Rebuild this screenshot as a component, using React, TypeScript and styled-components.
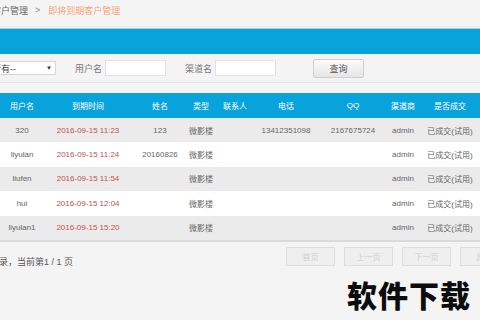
import React from "react";
import styled, { createGlobalStyle } from "styled-components";

const Global = createGlobalStyle`
  html, body { margin: 0; padding: 0; background: #f4f4f4; }
  body {
    font-family: "Liberation Sans", "Noto Sans CJK SC", sans-serif;
    color: #666;
    overflow: hidden;
  }
`;

const Page = styled.div`
  position: relative;
  width: 480px;
  height: 320px;
  overflow: hidden;
  background: #f4f4f4;
`;

const Breadcrumb = styled.div`
  height: 27px;
  display: flex;
  align-items: center;
  font-size: 9px;
  color: #666;
  border-bottom: 1px solid #e9e9e9;
  white-space: nowrap;
  padding-bottom: 6px;
  box-sizing: border-box;
`;

const Crumb = styled.span<{ $active?: boolean }>`
  color: ${(p) => (p.$active ? "#f5a57c" : "#666")};
  margin-left: ${(p) => (p.$active ? "0" : "-8px")};
`;

const Sep = styled.span`
  margin: 0 8px 0 7px;
  color: #888;
`;

const BlueBar = styled.div`
  margin-top: 1px;
  height: 25px;
  background: #09a3dc;
  border-top: 1px solid #8fd6f0;
`;

const FilterRow = styled.div`
  height: 28px;
  display: flex;
  align-items: center;
  border-bottom: 1px solid #e4e4e4;
  font-size: 9px;
  white-space: nowrap;
`;

const Select = styled.div`
  flex: none;
  width: 74px;
  margin-left: -18px;
  height: 14px;
  background: #fff;
  border: 1px solid #d6d6d6;
  display: flex;
  align-items: center;
  justify-content: space-between;
  padding: 0 3px 0 9px;
  box-sizing: border-box;
  color: #444;
  font-size: 9px;
`;

const Arrow = styled.span`
  font-size: 6px;
  color: #333;
`;

const Label = styled.span<{ $ml: number }>`
  margin-left: ${(p) => p.$ml}px;
  margin-right: 3px;
  color: #777;
`;

const Input = styled.div<{ $w: number }>`
  flex: none;
  width: ${(p) => p.$w}px;
  height: 16px;
  background: #fff;
  border: 1px solid #e2e2e2;
  box-sizing: border-box;
`;

const QueryButton = styled.div`
  flex: none;
  margin-left: 37px;
  width: 51px;
  height: 19px;
  box-sizing: border-box;
  border: 1px solid #cfcfcf;
  border-radius: 2px;
  background: linear-gradient(#fbfbfb, #e6e6e6);
  display: flex;
  align-items: center;
  justify-content: center;
  color: #555;
  font-size: 9px;
`;

const Table = styled.div`
  margin-top: 10px;
  border-bottom: 2px solid #dadada;
`;

const cols = "44px 88px 56px 26px 42px 60px 74px 26px 68px";

const HeadRow = styled.div`
  display: grid;
  grid-template-columns: ${cols};
  height: 25px;
  background: #09a3dc;
  color: #fff;
  font-size: 8px;
`;

const Row = styled.div<{ $alt: boolean }>`
  display: grid;
  grid-template-columns: ${cols};
  height: 24.4px;
  background: ${(p) => (p.$alt ? "#ebebeb" : "#ffffff")};
  font-size: 8px;
  color: #666;
`;

const Cell = styled.div<{ $red?: boolean }>`
  display: flex;
  align-items: center;
  justify-content: center;
  white-space: nowrap;
  min-width: 0;
  color: ${(p) => (p.$red ? "#c4514e" : "inherit")};
`;

const Footer = styled.div`
  display: flex;
  align-items: flex-start;
  height: 40px;
  padding-top: 5px;
  box-sizing: border-box;
`;

const Info = styled.div`
  margin-top: 8px;
  margin-left: -10px;
  font-size: 9px;
  color: #555;
  white-space: nowrap;
`;

const Pager = styled.div`
  margin-left: auto;
  margin-right: -29px;
  display: flex;
  gap: 9px;
`;

const PageBtn = styled.div`
  width: 49px;
  height: 19px;
  box-sizing: border-box;
  border: 1px solid #dedede;
  background: #efefef;
  display: flex;
  align-items: center;
  justify-content: center;
  font-size: 8px;
  color: #cfcfcf;
`;

const Watermark = styled.div`
  position: absolute;
  left: 347px;
  top: 272px;
  font-family: "Noto Sans CJK SC", sans-serif;
  font-weight: 900;
  font-size: 30px;
  letter-spacing: 1px;
  color: #0c0c0c;
  white-space: nowrap;
`;

type Rec = {
  user: string;
  time: string;
  name: string;
  type: string;
  contact: string;
  phone: string;
  qq: string;
  channel: string;
  deal: string;
};

const rows: Rec[] = [
  { user: "320", time: "2016-09-15 11:23", name: "123", type: "微影楼", contact: "", phone: "13412351098", qq: "2167675724", channel: "admin", deal: "已成交(试用)" },
  { user: "liyulan", time: "2016-09-15 11:24", name: "20160826", type: "微影楼", contact: "", phone: "", qq: "", channel: "admin", deal: "已成交(试用)" },
  { user: "liufen", time: "2016-09-15 11:54", name: "", type: "微影楼", contact: "", phone: "", qq: "", channel: "admin", deal: "已成交(试用)" },
  { user: "hui", time: "2016-09-15 12:04", name: "", type: "微影楼", contact: "", phone: "", qq: "", channel: "admin", deal: "已成交(试用)" },
  { user: "liyulan1", time: "2016-09-15 15:20", name: "", type: "微影楼", contact: "", phone: "", qq: "", channel: "admin", deal: "已成交(试用)" },
];

const heads = ["用户名", "到期时间", "姓名", "类型", "联系人", "电话", "QQ", "渠道商", "是否成交"];

export default function App() {
  return (
    <Page>
      <Global />
      <Breadcrumb>
        <Crumb>客户管理</Crumb>
        <Sep>&gt;</Sep>
        <Crumb $active>即将到期客户管理</Crumb>
      </Breadcrumb>
      <BlueBar />
      <FilterRow>
        <Select>
          <span>所有--</span>
          <Arrow>▼</Arrow>
        </Select>
        <Label $ml={19}>用户名</Label>
        <Input $w={61} />
        <Label $ml={19}>渠道名</Label>
        <Input $w={61} />
        <QueryButton>查询</QueryButton>
      </FilterRow>
      <Table>
        <HeadRow>
          {heads.map((h) => (
            <Cell key={h}>{h}</Cell>
          ))}
        </HeadRow>
        {rows.map((r, i) => (
          <Row key={r.user} $alt={i % 2 === 0}>
            <Cell>{r.user}</Cell>
            <Cell $red>{r.time}</Cell>
            <Cell>{r.name}</Cell>
            <Cell>{r.type}</Cell>
            <Cell>{r.contact}</Cell>
            <Cell>{r.phone}</Cell>
            <Cell>{r.qq}</Cell>
            <Cell>{r.channel}</Cell>
            <Cell>{r.deal}</Cell>
          </Row>
        ))}
      </Table>
      <Footer>
        <Info>记录，当前第1 / 1 页</Info>
        <Pager>
          <PageBtn>首页</PageBtn>
          <PageBtn>上一页</PageBtn>
          <PageBtn>下一页</PageBtn>
          <PageBtn>尾页</PageBtn>
        </Pager>
      </Footer>
      <Watermark>软件下载</Watermark>
    </Page>
  );
}
